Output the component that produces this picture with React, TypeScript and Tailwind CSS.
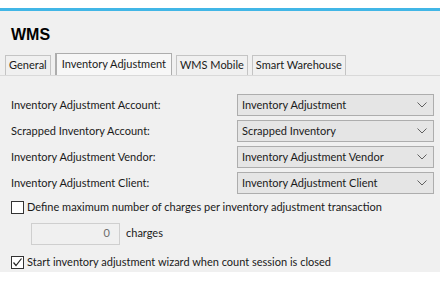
import React from "react";

const ROWS = [
  ["Inventory Adjustment Account:", "Inventory Adjustment"],
  ["Scrapped Inventory Account:", "Scrapped Inventory"],
  ["Inventory Adjustment Vendor:", "Inventory Adjustment Vendor"],
  ["Inventory Adjustment Client:", "Inventory Adjustment Client"],
];

const TABS = ["General", "Inventory Adjustment", "WMS Mobile", "Smart Warehouse"];

function Chevron() {
  return (
    <svg width="10" height="6" viewBox="0 0 10 6" className="shrink-0">
      <path d="M0.5 0.5 L5 5 L9.5 0.5" fill="none" stroke="#606060" strokeWidth="1" />
    </svg>
  );
}

function Check() {
  return (
    <svg width="11" height="11" viewBox="0 0 11 11">
      <path d="M1.5 5.5 L4 8.5 L9.5 1.5" fill="none" stroke="#222" strokeWidth="1.2" />
    </svg>
  );
}

export default function App() {
  return (
    <div className="w-[440px] h-[283px] bg-white flex flex-col text-[11px] text-[#1a1a1a] font-['Lato',sans-serif] whitespace-nowrap overflow-hidden">
      <div className="h-[8px] bg-white" />
      <div className="h-[3px] bg-[#41b6e6]" />
      <div className="bg-[#f0f0f0] h-[261px] flex flex-col">
        {/* Title */}
        <h1 className="pl-[11px] pt-[12px] h-[40px] text-[16px] font-bold font-['Liberation_Sans',sans-serif] text-black">
          WMS
        </h1>

        {/* Tabs */}
        <div className="flex items-end pl-[5px] h-[25px] border-b border-[#d9d9d9] gap-[4px]">
          {TABS.map((t, i) => (
            <div
              key={t}
              className={
                i === 1
                  ? "h-[22px] px-[5px] pb-[1px] flex items-center bg-[#f7f7f7] border border-[#adadad] border-b-0 border-l-2"
                  : "h-[20px] px-[3px] flex items-center bg-[#f0f0f0] border border-[#c4c4c4] border-b-0"
              }
            >
              {t}
            </div>
          ))}
        </div>

        {/* Account rows */}
        <div className="flex flex-col gap-[4px] pt-[18px] pl-[11px] pr-[6px]">
          {ROWS.map(([label, value]) => (
            <div key={label} className="flex items-center h-[22px]">
              <span className="w-[226px]">{label}</span>
              <div className="flex-1 h-[22px] flex items-center justify-between px-[4px] pr-[6px] bg-[#e5e5e5] border border-[#adadad]">
                <span>{value}</span>
                <Chevron />
              </div>
            </div>
          ))}
        </div>

        {/* Options */}
        <div className="flex flex-col pl-[11px] pt-[5px]">
          <label className="flex items-center gap-[3px] h-[16px]">
            <span className="w-[13px] h-[13px] border border-[#333] bg-white shrink-0" />
            <span>Define maximum number of charges per inventory adjustment transaction</span>
          </label>
          <div className="flex items-center gap-[6px] pl-[20px] pt-[7px] h-[30px]">
            <div className="w-[89px] h-[22px] border border-[#cfcfcf] bg-[#f0f0f0] flex items-center justify-end pr-[9px] text-[#6d6d6d]">
              0
            </div>
            <span>charges</span>
          </div>
          <label className="flex items-center gap-[3px] h-[16px] mt-[9px]">
            <span className="w-[13px] h-[13px] border border-[#333] bg-white flex items-center justify-center shrink-0">
              <Check />
            </span>
            <span>Start inventory adjustment wizard when count session is closed</span>
          </label>
        </div>
      </div>
    </div>
  );
}
